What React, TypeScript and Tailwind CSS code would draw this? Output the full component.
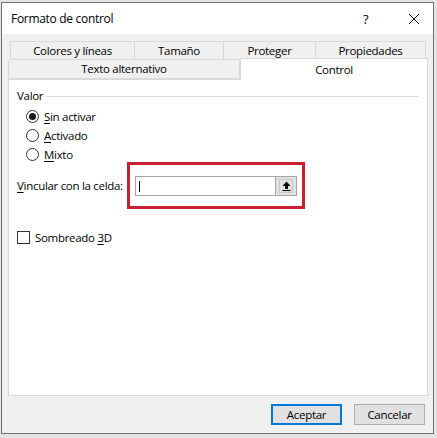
import React from "react";

const font = "font-['Open_Sans','Noto_Sans',sans-serif]";

function Radio({ checked, u, rest }: { checked?: boolean; u: string; rest: string }) {
  return (
    <div className="flex items-center h-[19px]">
      <div className="w-[13px] h-[13px] rounded-full border border-[#333] bg-white flex items-center justify-center">
        {checked && <div className="w-[7px] h-[7px] rounded-full bg-[#1a1a1a]" />}
      </div>
      <span className="ml-[5px] leading-none">
        <span className="underline underline-offset-2">{u}</span>
        {rest}
      </span>
    </div>
  );
}

export default function App() {
  return (
    <div className={`w-[437px] h-[438px] bg-[#e4e4e4] pt-[2px] pl-[1px] ${font} text-[11.5px] tracking-[-0.3px] text-black`}>
      <div className="w-[433px] h-[432px] border border-[#707070] bg-[#f0f0f0] flex flex-col">
        {/* title bar */}
        <div className="h-[31px] bg-white flex items-center relative shrink-0">
          <span className="ml-[9px] text-[12px]">Formato de control</span>
          <span className="absolute left-[361px] top-[7px] text-[13px]">?</span>
          <svg className="absolute left-[406px] top-[10px]" width="12" height="12" viewBox="0 0 12 12">
            <path d="M1 1 L11 11 M11 1 L1 11" stroke="#111" strokeWidth="1" />
          </svg>
        </div>
        {/* body */}
        <div className="flex-1 relative">
          <div className="ml-[6px] mt-[7px] w-[420px]">
            {/* row 1 */}
            <div className="ml-[2px] w-[416px] h-[19px] flex">
              <div className="w-[125px] border border-[#d9d9d9] flex items-center justify-center">Colores y líneas</div>
              <div className="w-[89px] border border-l-0 border-[#d9d9d9] flex items-center justify-center">Tamaño</div>
              <div className="w-[92px] border border-l-0 border-[#d9d9d9] flex items-center justify-center">Proteger</div>
              <div className="w-[110px] border border-l-0 border-[#d9d9d9] flex items-center justify-center">Propiedades</div>
            </div>
            {/* row 2 */}
            <div className="w-[420px] h-[19px] flex relative">
              <div className="w-[232px] border border-t-0 border-[#d9d9d9] flex items-center justify-center">Texto alternativo</div>
              <div className="absolute left-[232px] top-[-2px] w-[188px] h-[22px] bg-white border border-b-0 border-[#d9d9d9] flex items-center justify-center z-10">Control</div>
            </div>
            {/* panel */}
            <div className="w-[420px] h-[317px] bg-white border border-[#d9d9d9] relative">
              <div className="flex items-center mt-[8px] ml-[8px] h-[16px]">
                <span>Valor</span>
                <div className="flex-1 h-px bg-[#dcdcdc] ml-[3px] mr-[8px]" />
              </div>
              <div className="ml-[17px] mt-[3px] flex flex-col">
                <Radio checked u="S" rest="in activar" />
                <Radio u="A" rest="ctivado" />
                <Radio u="M" rest="ixto" />
              </div>
              <div className="flex items-center mt-[12px] ml-[8px]">
                <span className="w-[118px] whitespace-nowrap">
                  <span className="underline underline-offset-2">V</span>incular con la celda:
                </span>
                <div className="relative">
                  <div className="absolute left-[-8px] top-[-14px] w-[178px] h-[47px] border-[3px] border-[#c8202e]" />
                  <div className="flex h-[20px]">
                    <div className="w-[140px] h-[20px] border border-[#a5a5a5] border-r-0 bg-white relative">
                      <div className="absolute left-[3px] top-[4px] w-px h-[11px] bg-black" />
                    </div>
                    <div className="w-[22px] h-[20px] border border-[#a5a5a5] bg-[#e1e1e1] flex items-center justify-center">
                      <div className="w-[14px] h-[14px] border border-[#c9c9c9] flex items-center justify-center">
                        <svg width="9" height="10" viewBox="0 0 9 10">
                          <path d="M4.5 0.5 L8.5 5 L6 5 L6 8 L3 8 L3 5 L0.5 5 Z" fill="#000" />
                          <rect x="0.5" y="9" width="8" height="1" fill="#000" />
                        </svg>
                      </div>
                    </div>
                  </div>
                </div>
              </div>
              <div className="flex items-center mt-[33px] ml-[8px]">
                <div className="w-[13px] h-[13px] border border-[#333] bg-white" />
                <span className="ml-[5px]">
                  Sombreado <span className="underline underline-offset-2">3</span>D
                </span>
              </div>
            </div>
          </div>
          {/* buttons */}
          <div className="flex justify-end gap-[12px] mt-[8px] mr-[8px]">
            <div className="w-[71px] h-[21px] border-2 border-[#0078d7] bg-[#e1e1e1] flex items-center justify-center">Aceptar</div>
            <div className="w-[71px] h-[21px] border border-[#adadad] bg-[#e1e1e1] flex items-center justify-center">Cancelar</div>
          </div>
        </div>
      </div>
    </div>
  );
}
